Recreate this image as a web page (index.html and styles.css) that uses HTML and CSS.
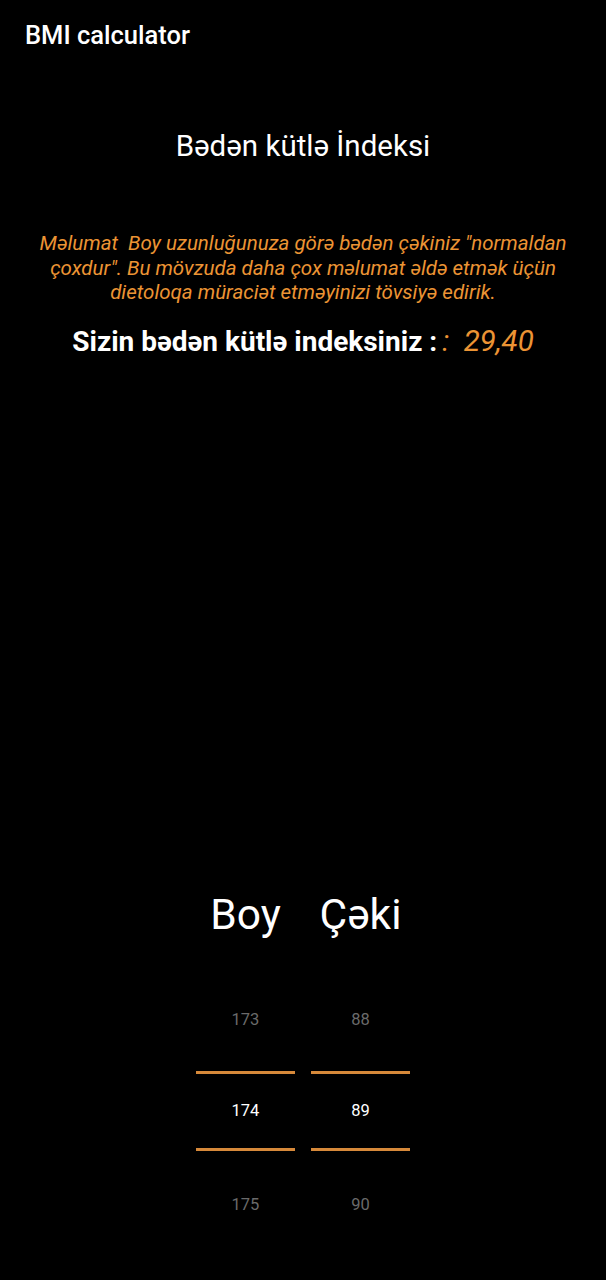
FILE: index.html
```html
<!DOCTYPE html>
<html>
<head>
<meta charset="utf-8">
<link rel="stylesheet" href="styles.css">
</head>
<body>
<header class="appbar">BMI calculator</header>
<main class="content">
  <h1 class="title">Bədən kütlə İndeksi</h1>
  <p class="info">Məlumat&nbsp; Boy uzunluğunuza görə bədən çəkiniz "normaldan çoxdur". Bu mövzuda daha çox məlumat əldə etmək üçün dietoloqa müraciət etməyinizi tövsiyə edirik.</p>
  <div class="result"><span class="label">Sizin bədən kütlə indeksiniz :</span><span class="value">:&nbsp; 29,40</span></div>
  <div class="spacer"></div>
  <div class="pickers">
    <div class="picker">
      <div class="head">Boy</div>
      <div class="item dim first">173</div>
      <div class="line"></div>
      <div class="item sel">174</div>
      <div class="line"></div>
      <div class="item dim last">175</div>
    </div>
    <div class="picker">
      <div class="head">Çəki</div>
      <div class="item dim first">88</div>
      <div class="line"></div>
      <div class="item sel">89</div>
      <div class="line"></div>
      <div class="item dim last">90</div>
    </div>
  </div>
</main>
</body>
</html>
```
FILE: styles.css
```css
html, body {
  margin: 0;
  padding: 0;
  background: #000;
  color: #fff;
  font-family: Roboto, "Noto Sans", sans-serif;
}
body {
  width: 606px;
  height: 1280px;
  overflow: hidden;
}
.appbar {
  padding: 19px 0 0 25px;
  height: 37px;
  line-height: 32px;
  font-size: 25.5px;
  font-weight: 500;
}
.content {
  display: flex;
  flex-direction: column;
  align-items: center;
}
.title {
  margin: 72px 0 0;
  font-size: 29.5px;
  font-weight: 400;
  line-height: 36px;
}
.info {
  margin: 67px 0 0;
  width: 566px;
  text-align: center;
  color: #ec9434;
  font-style: italic;
  font-size: 20.5px;
  line-height: 24.5px;
}
.result {
  margin-top: 18px;
  display: flex;
  align-items: baseline;
  line-height: 36px;
}
.label {
  font-size: 28px;
  font-weight: 700;
}
.value {
  margin-left: 5px;
  color: #ec9434;
  font-size: 29.5px;
  font-style: italic;
}
.spacer {
  height: 530px;
}
.pickers {
  display: flex;
  gap: 16px;
}
.picker {
  width: 99px;
  display: flex;
  flex-direction: column;
  align-items: stretch;
}
.head {
  text-align: center;
  font-size: 42.5px;
  line-height: 50px;
  margin-bottom: 60px;
}
.item {
  text-align: center;
  font-size: 16.5px;
  height: 40px;
  line-height: 40px;
}
.item.dim { color: #6a6a6a; }
.item.sel { height: 74px; line-height: 74px; color: #fff; }
.item.first { margin-bottom: 31px; }
.item.last { margin-top: 34px; }
.line {
  height: 3px;
  background: #d6893a;
}
```
